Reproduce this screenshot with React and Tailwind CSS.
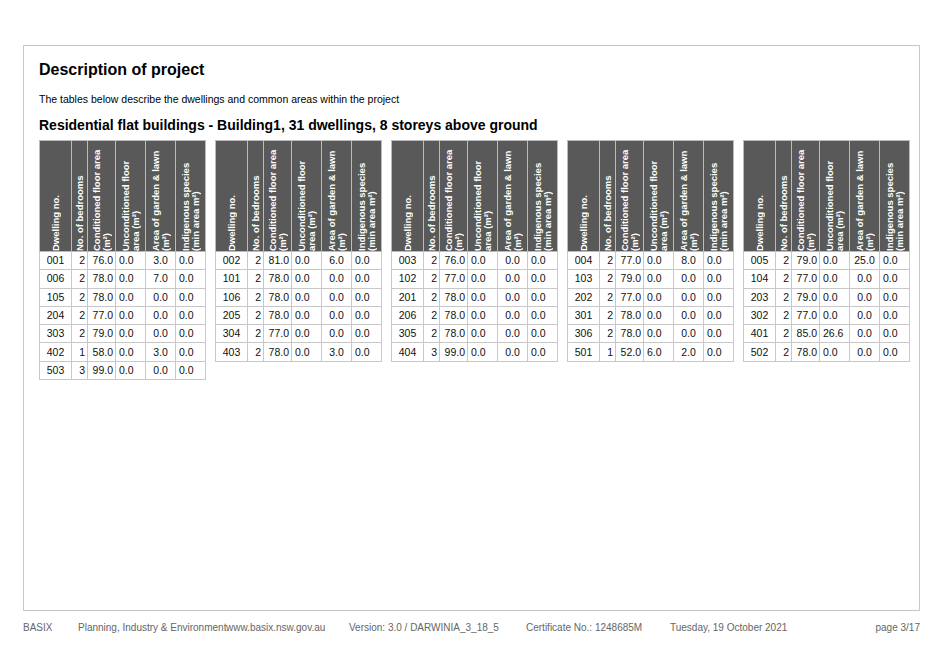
const tables = [
  [["001",2,"76.0","0.0","3.0","0.0"],["006",2,"78.0","0.0","7.0","0.0"],["105",2,"78.0","0.0","0.0","0.0"],["204",2,"77.0","0.0","0.0","0.0"],["303",2,"79.0","0.0","0.0","0.0"],["402",1,"58.0","0.0","3.0","0.0"],["503",3,"99.0","0.0","0.0","0.0"]],
  [["002",2,"81.0","0.0","6.0","0.0"],["101",2,"78.0","0.0","0.0","0.0"],["106",2,"78.0","0.0","0.0","0.0"],["205",2,"78.0","0.0","0.0","0.0"],["304",2,"77.0","0.0","0.0","0.0"],["403",2,"78.0","0.0","3.0","0.0"]],
  [["003",2,"76.0","0.0","0.0","0.0"],["102",2,"77.0","0.0","0.0","0.0"],["201",2,"78.0","0.0","0.0","0.0"],["206",2,"78.0","0.0","0.0","0.0"],["305",2,"78.0","0.0","0.0","0.0"],["404",3,"99.0","0.0","0.0","0.0"]],
  [["004",2,"77.0","0.0","8.0","0.0"],["103",2,"79.0","0.0","0.0","0.0"],["202",2,"77.0","0.0","0.0","0.0"],["301",2,"78.0","0.0","0.0","0.0"],["306",2,"78.0","0.0","0.0","0.0"],["501",1,"52.0","6.0","2.0","0.0"]],
  [["005",2,"79.0","0.0","25.0","0.0"],["104",2,"77.0","0.0","0.0","0.0"],["203",2,"79.0","0.0","0.0","0.0"],["302",2,"77.0","0.0","0.0","0.0"],["401",2,"85.0","26.6","0.0","0.0"],["502",2,"78.0","0.0","0.0","0.0"]],
];
const heads = ["Dwelling no.","No. of bedrooms","Conditioned floor area (m²)","Unconditioned floor area (m²)","Area of garden & lawn (m²)","Indigenous species (min area m²)"];
const widths = [32,16,28,30,30,30];
const aligns = ["text-center","text-right pr-[2px]","text-right pr-[2px]","text-left pl-[3px]","text-center","text-left pl-[3px]"];

function T({rows}) {
  return (
    <table className="border-collapse self-start w-[166px] table-fixed shrink-0">
      <colgroup>{widths.map((w,i)=><col key={i} style={{width:w}}/>)}</colgroup>
      <thead>
        <tr>
          {heads.map((h,i)=>(
            <th key={i} className="bg-[#595959] border border-[#bbb] h-[110px] p-0 align-bottom overflow-hidden">
              <div className="h-[110px] overflow-hidden flex justify-center items-start">
                <div className="[writing-mode:vertical-rl] rotate-180 text-white font-bold text-[9.5px] leading-[10px] text-left py-[5px] whitespace-normal h-[110px]">{h}</div>
              </div>
            </th>
          ))}
        </tr>
      </thead>
      <tbody>
        {rows.map((r,ri)=>(
          <tr key={ri} className="h-[18.3px]">
            {r.map((c,ci)=>(
              <td key={ci} className={`border border-[#c8c8c8] text-[10.5px] leading-[17px] p-0 text-[#111] whitespace-nowrap overflow-hidden ${aligns[ci]}`}>{c}</td>
            ))}
          </tr>
        ))}
      </tbody>
    </table>
  );
}

export default function App() {
  return (
    <div className="w-[943px] h-[661px] bg-white relative" style={{fontFamily:'"Liberation Sans", Arial, sans-serif'}}>
      <div className="absolute left-[23px] top-[45px] w-[897px] h-[566px] border border-[#c8c8c8] pl-[15px] pt-[14px]">
        <div className="text-[16px] font-bold text-black leading-[20px]">Description of project</div>
        <div className="text-[10.5px] mt-[12px] text-black leading-[14px]">The tables below describe the dwellings and common areas within the project</div>
        <div className="text-[14px] font-bold mt-[10px] leading-[18px] text-black">Residential flat buildings - Building1, 31 dwellings, 8 storeys above ground</div>
        <div className="flex gap-[9px] mt-[6px]">
          {tables.map((t,i)=><T key={i} rows={t}/>)}
        </div>
      </div>
      <div className="absolute left-[23px] top-[620px] w-[897px] flex text-[10px] text-[#666] whitespace-nowrap">
        <span className="w-[55px]">BASIX</span>
        <span className="w-[148px]">Planning, Industry &amp; Environment</span>
        <span className="w-[123px]">www.basix.nsw.gov.au</span>
        <span className="w-[177px]">Version: 3.0 / DARWINIA_3_18_5</span>
        <span className="w-[144px]">Certificate No.: 1248685M</span>
        <span className="flex-1">Tuesday, 19 October 2021</span>
        <span>page 3/17</span>
      </div>
    </div>
  );
}
